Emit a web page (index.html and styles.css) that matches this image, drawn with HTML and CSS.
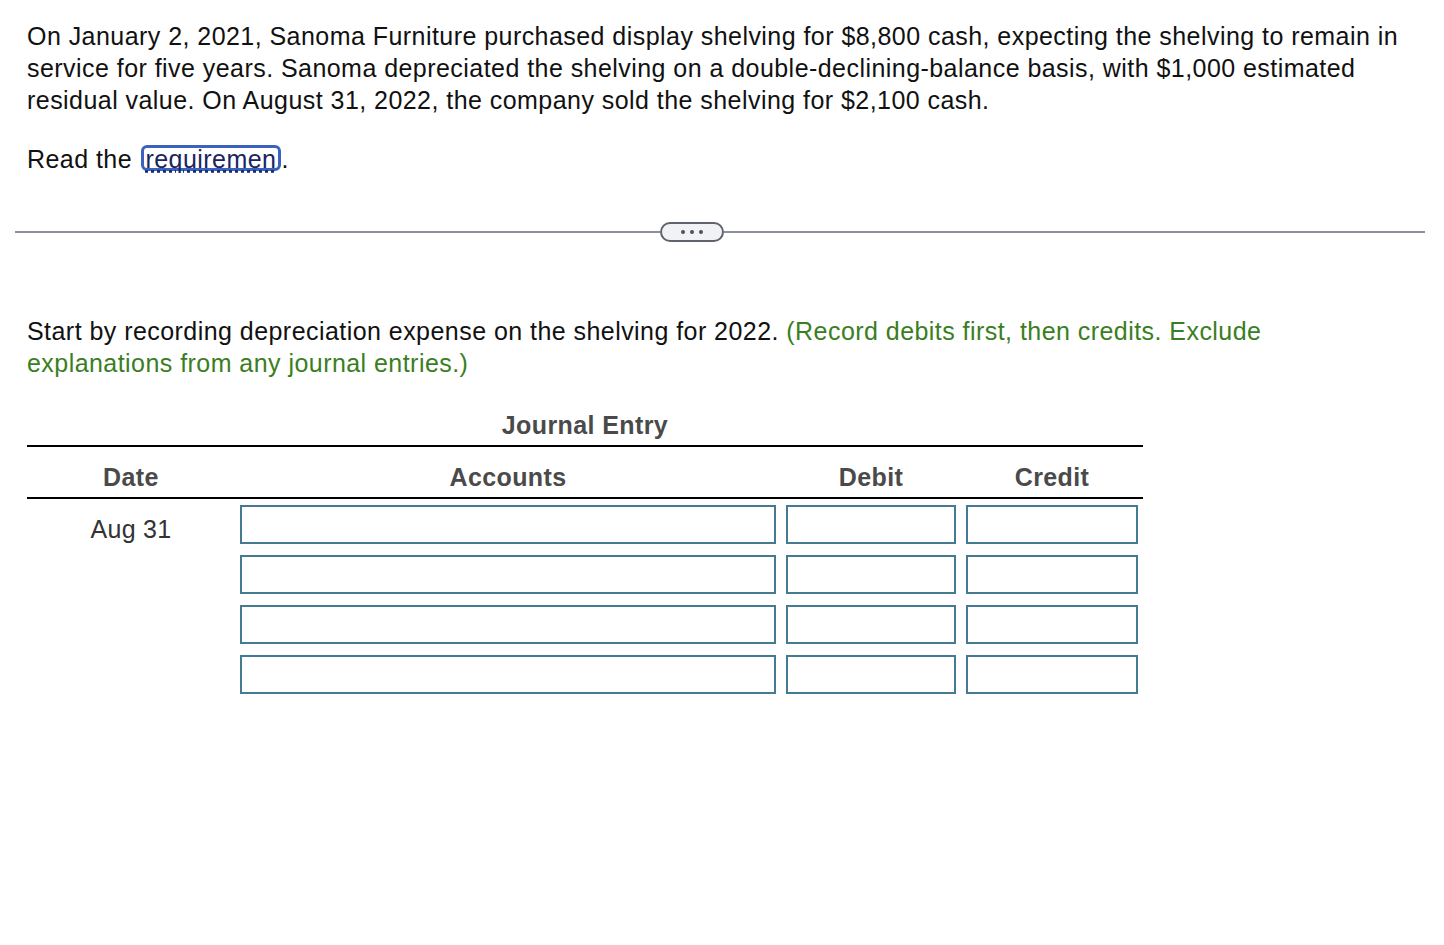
FILE: index.html
```html
<!DOCTYPE html>
<html>
<head>
<meta charset="utf-8">
<link rel="stylesheet" href="styles.css">
</head>
<body>
<section class="problem">
  <p class="text">On January 2, 2021, Sanoma Furniture purchased display shelving for $8,800 cash, expecting the shelving to remain in service for five years. Sanoma depreciated the shelving on a double-declining-balance basis, with $1,000 estimated residual value. On August 31, 2022, the company sold the shelving for $2,100 cash.</p>
  <p class="text read">Read the <span class="link"><span class="link-text">requiremen</span></span>.</p>
</section>
<div class="divider">
  <div class="line left"></div>
  <div class="pill"><span class="dot"></span><span class="dot"></span><span class="dot"></span></div>
  <div class="line right"></div>
</div>
<section class="task">
  <p class="text instr">Start by recording depreciation expense on the shelving for 2022. <span class="green">(Record debits first, then credits. Exclude explanations from any journal entries.)</span></p>
  <div class="journal">
    <div class="title">Journal Entry</div>
    <div class="grid head">
      <div class="hcell">Date</div>
      <div class="hcell">Accounts</div>
      <div class="hcell">Debit</div>
      <div class="hcell">Credit</div>
    </div>
    <div class="grid row">
      <div class="date">Aug 31</div>
      <div class="cell"><div class="box"></div></div>
      <div class="cell"><div class="box"></div></div>
      <div class="cell"><div class="box"></div></div>
    </div>
    <div class="grid row">
      <div class="date"></div>
      <div class="cell"><div class="box"></div></div>
      <div class="cell"><div class="box"></div></div>
      <div class="cell"><div class="box"></div></div>
    </div>
    <div class="grid row">
      <div class="date"></div>
      <div class="cell"><div class="box"></div></div>
      <div class="cell"><div class="box"></div></div>
      <div class="cell"><div class="box"></div></div>
    </div>
    <div class="grid row">
      <div class="date"></div>
      <div class="cell"><div class="box"></div></div>
      <div class="cell"><div class="box"></div></div>
      <div class="cell"><div class="box"></div></div>
    </div>
  </div>
</section>
</body>
</html>
```

FILE: styles.css
```css
html, body {
  margin: 0;
  padding: 0;
  background: #ffffff;
}
body {
  font-family: "Liberation Sans", Arial, sans-serif;
  font-size: 25px;
  line-height: 32px;
  color: #111111;
}
.text {
  margin: 0;
  letter-spacing: 0.45px;
}
.problem {
  padding: 20px 37px 0 27px;
}
.read {
  margin-top: 27px;
}
.link {
  display: inline-block;
  border: 3px solid #3b62c0;
  border-radius: 6px;
  line-height: 22px;
  height: 20px;
  padding: 0 2px 0 1px;
  margin-left: 2px;
  vertical-align: baseline;
}
.link-text {
  color: #17265e;
  text-decoration: underline dotted #17265e;
}
.divider {
  display: flex;
  align-items: center;
  margin: 47px 19px 0 15px;
  height: 20px;
}
.line {
  height: 2px;
  background: #8c8f98;
}
.line.left {
  width: 645px;
}
.line.right {
  flex: 1;
}
.pill {
  width: 60px;
  height: 16px;
  border: 2px solid #5f636b;
  border-radius: 10px;
  background: #f0f2f6;
  display: flex;
  align-items: center;
  justify-content: center;
  gap: 5px;
}
.dot {
  width: 4px;
  height: 4px;
  border-radius: 50%;
  background: #4d5159;
}
.task {
  padding: 73px 37px 0 27px;
}
.green {
  color: #3a7e22;
}
.journal {
  width: 1116px;
  margin-top: 30px;
}
.title {
  text-align: center;
  font-weight: bold;
  color: #4a4a4a;
  letter-spacing: 0.4px;
  margin-bottom: 4px;
}
.grid {
  display: grid;
  grid-template-columns: 208px 546px 180px 182px;
}
.head {
  border-top: 2px solid #000;
  border-bottom: 2px solid #000;
  padding: 14px 0 4px 0;
}
.hcell {
  text-align: center;
  font-weight: bold;
  color: #4a4a4a;
  letter-spacing: 0.4px;
}
.row {
  height: 50px;
}
.date {
  text-align: center;
  color: #333333;
  padding-top: 14px;
  letter-spacing: 0.3px;
}
.cell {
  padding: 6px 5px 0 5px;
}
.box {
  height: 35px;
  border: 2px solid #447a92;
}
```
